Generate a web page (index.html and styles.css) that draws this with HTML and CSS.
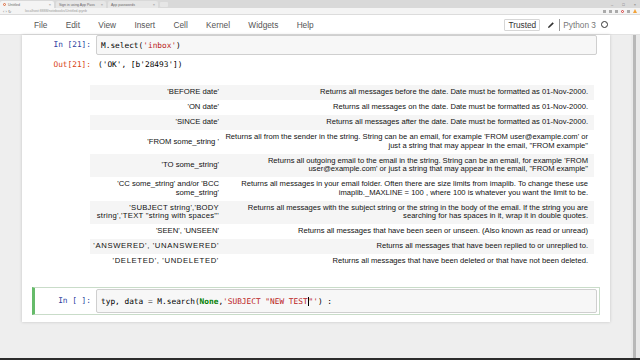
FILE: index.html
```html
<!DOCTYPE html>
<html lang="en">
<head>
    <meta charset="UTF-8">
    <title>Untitled</title>
    <link rel="stylesheet" href="styles.css">
</head>
<body>

<div class="tabs">
    <div class="tab active"><span class="favicon"></span><span class="tab-title">Untitled</span><span class="tab-x">×</span></div>
    <div class="tab"><span class="tab-title">Sign in using App Pass</span><span class="tab-x">×</span></div>
    <div class="tab"><span class="tab-title">App passwords</span><span class="tab-x">×</span></div>
    <div class="tab-new"></div>
    <div class="win-btns"><span>–</span><span>□</span><span>×</span></div>
</div>

<div class="address">
    <span class="nav">‹ › ↻</span>
    <span class="url">localhost:8888/notebooks/Untitled.ipynb</span>
    <div class="ext">
        <span class="ext-ico"></span>
        <span class="ext-ico"></span>
        <span class="ext-ico"></span>
        <span class="ext-ico red"></span>
        <span class="ext-ico"></span>
        <span class="ext-warn"></span>
    </div>
</div>

<header class="menubar">
    <nav class="menu">
        <span>File</span>
        <span>Edit</span>
        <span>View</span>
        <span>Insert</span>
        <span>Cell</span>
        <span>Kernel</span>
        <span>Widgets</span>
        <span>Help</span>
    </nav>
    <div class="kernel">
        <span class="trusted">Trusted</span>
        <svg class="pencil" width="8" height="8" viewBox="0 0 8 8">
            <path d="M1 7 L1.4 5.4 L5.6 1.2 L6.8 2.4 L2.6 6.6 Z" fill="#333"/>
        </svg>
        <span class="divider"></span>
        <span class="kernel-name">Python 3</span>
        <span class="kernel-dot"></span>
    </div>
</header>

<div class="site">
    <div class="page">
        <div class="notebook">

            <div class="cell first">
                <div class="prompt in">In&nbsp;[21]:</div>
                <div class="input">M.select(<span class="str">'inbox'</span>)</div>
            </div>
            <div class="cell out-cell">
                <div class="prompt out">Out[21]:</div>
                <div class="output">('OK', [b'28493'])</div>
            </div>

            <div class="cell md-cell">
                <div class="prompt"></div>
                <div class="md">
                    <table class="search-table">
                        <colgroup><col class="col-key"><col class="col-desc"></colgroup>
                        <tr><td>'BEFORE date'</td><td>Returns all messages before the date. Date must be formatted as 01-Nov-2000.</td></tr>
                        <tr><td>'ON date'</td><td>Returns all messages on the date. Date must be formatted as 01-Nov-2000.</td></tr>
                        <tr><td>'SINCE date'</td><td>Returns all messages after the date. Date must be formatted as 01-Nov-2000.</td></tr>
                        <tr><td>'FROM some_string '</td><td>Returns all from the sender in the string. String can be an email, for example 'FROM user@example.com' or<br>just a string that may appear in the email, "FROM example"</td></tr>
                        <tr><td>'TO some_string'</td><td>Returns all outgoing email to the email in the string. String can be an email, for example 'FROM<br>user@example.com' or just a string that may appear in the email, "FROM example"</td></tr>
                        <tr><td>'CC some_string' and/or 'BCC<br>some_string'</td><td>Returns all messages in your email folder. Often there are size limits from imaplib. To change these use<br>imaplib._MAXLINE = 100 , where 100 is whatever you want the limit to be.</td></tr>
                        <tr><td class="spaced">'SUBJECT string','BODY<br>string','TEXT "string with spaces"'</td><td>Returns all messages with the subject string or the string in the body of the email. If the string you are<br>searching for has spaces in it, wrap it in double quotes.</td></tr>
                        <tr><td>'SEEN', 'UNSEEN'</td><td>Returns all messages that have been seen or unseen. (Also known as read or unread)</td></tr>
                        <tr><td class="wide">'ANSWERED', 'UNANSWERED'</td><td>Returns all messages that have been replied to or unreplied to.</td></tr>
                        <tr><td class="wide">'DELETED', 'UNDELETED'</td><td>Returns all messages that have been deleted or that have not been deleted.</td></tr>
                    </table>
                </div>
            </div>

            <div class="cell selected">
                <div class="prompt in">In&nbsp;[&nbsp;]:</div>
                <div class="input">typ, data <span class="op">=</span> M.search(<span class="kw">None</span>,<span class="str">'SUBJECT "NEW TEST<span class="cursor"></span>"'</span>) :</div>
            </div>

        </div>
    </div>
    <div class="scrollbar"><div class="thumb"></div></div>
</div>

<div class="taskbar"></div>

</body>
</html>
```

FILE: styles.css
```css
*{
    margin: 0;
    padding: 0;
    box-sizing: border-box;
}

body{
    width: 640px;
    height: 360px;
    overflow: hidden;
    background-color: #eeeeee;
    font-family: "Liberation Sans", Arial, sans-serif;
    color: #000;
}

/* browser chrome */

.tabs{
    display: flex;
    align-items: flex-end;
    height: 8px;
    background-color: #d9d9d9;
}

.tab{
    display: flex;
    align-items: center;
    gap: 2px;
    width: 50px;
    height: 7px;
    margin-right: 2px;
    padding: 0 3px;
    background-color: #e6e6e6;
    border-radius: 2px 2px 0 0;
    font-size: 3.5px;
    color: #666;
}

.tab.active{
    width: 54px;
    background-color: #f4f4f4;
}

.favicon{
    width: 3px;
    height: 3px;
    border-radius: 50%;
    border: 1px solid #e06a3b;
}

.tab-title{
    flex: 1;
    white-space: nowrap;
}

.tab-x{
    font-size: 4px;
    color: #888;
}

.tab-new{
    width: 8px;
    height: 5px;
    margin-bottom: 1px;
    background-color: #e6e6e6;
    border-radius: 1px;
}

.win-btns{
    display: flex;
    gap: 9px;
    margin-left: auto;
    padding-right: 4px;
    align-self: center;
    font-size: 4px;
    color: #666;
}

.address{
    display: flex;
    align-items: center;
    height: 7px;
    padding: 0 3px;
    background-color: #f4f4f4;
    border-bottom: 1px solid #dcdcdc;
    font-size: 3.5px;
    color: #888;
}

.nav{
    width: 22px;
    font-size: 4px;
    color: #777;
}

.url{
    color: #999;
}

.ext{
    display: flex;
    gap: 3px;
    margin-left: auto;
    align-items: center;
}

.ext-ico{
    width: 3px;
    height: 3px;
    background-color: #aaa;
}

.ext-ico.red{
    border-radius: 50%;
    background-color: #fff;
    border: 1px solid #d43c3c;
}

.ext-warn{
    width: 0;
    height: 0;
    border-left: 2px solid transparent;
    border-right: 2px solid transparent;
    border-bottom: 4px solid #f2a33a;
}

/* notebook header */

.menubar{
    display: flex;
    align-items: center;
    height: 20px;
    background-color: #fff;
    border-bottom: 1px solid #e2e2e2;
}

.menu{
    display: flex;
    gap: 18.3px;
    padding-left: 34px;
    font-size: 8.3px;
    color: #555;
}

.kernel{
    display: flex;
    align-items: center;
    margin-left: auto;
    padding-right: 32px;
    font-size: 8.3px;
}

.trusted{
    display: flex;
    align-items: center;
    height: 12px;
    padding: 0 3px;
    border: 1px solid #d6d6d6;
    border-radius: 1px;
    color: #333;
}

.pencil{
    margin-left: 7px;
}

.divider{
    width: 1px;
    height: 12px;
    margin: 0 3px 0 4px;
    background-color: #999;
}

.kernel-name{
    color: #777;
}

.kernel-dot{
    width: 7px;
    height: 7px;
    margin-left: 5px;
    border: 1px solid #333;
    border-radius: 50%;
}

/* notebook */

.site{
    display: flex;
    height: 323px;
}

.page{
    flex: 1;
    padding-left: 22px;
}

.notebook{
    width: 588px;
    height: 287px;
    background-color: #fff;
    box-shadow: 0 0 3px rgba(0, 0, 0, 0.18);
}

.cell{
    display: flex;
    margin: 0 10px;
    padding: 0 2px;
    border: 1px solid transparent;
}

.cell.first{
    border-top: 0;
}

.prompt{
    flex: 0 0 61px;
    padding-right: 5px;
    text-align: right;
    font-family: "DejaVu Sans Mono", monospace;
    font-size: 7.8px;
    line-height: 19px;
}

.prompt.in{
    color: #303f9f;
}

.prompt.out{
    color: #d84315;
    line-height: 13px;
}

.input{
    flex: 1;
    height: 20px;
    padding-left: 4px;
    background-color: #f7f7f7;
    border: 1px solid #cfcfcf;
    border-radius: 2px;
    font-family: "DejaVu Sans Mono", monospace;
    font-size: 7.8px;
    line-height: 19px;
    color: #000;
    white-space: pre;
}

.str{
    color: #ba2121;
}

.kw{
    color: #008000;
    font-weight: bold;
}

.op{
    color: #666;
}

.cursor{
    display: inline-block;
    width: 0;
    height: 9px;
    border-left: 1px solid #000;
    vertical-align: -2px;
}

.out-cell{
    margin-top: 1px;
}

.output{
    padding-left: 2px;
    font-family: "DejaVu Sans Mono", monospace;
    font-size: 7.8px;
    line-height: 13px;
    white-space: pre;
}

.md-cell{
    margin-top: 12px;
}

.md{
    flex: 1;
}

.search-table{
    table-layout: fixed;
    width: 504px;
    margin-left: -6px;
    border-collapse: collapse;
    font-size: 7.6px;
    line-height: 8.5px;
    color: #111;
}

.col-key{
    width: 130px;
}

.col-desc{
    width: 374px;
}

.search-table td{
    padding: 3.25px 1px;
    text-align: right;
    white-space: nowrap;
}

.search-table td:first-child{
    padding-left: 0;
    font-size: 7.7px;
}

.search-table td:last-child{
    padding-right: 6px;
}

.search-table td.spaced{
    letter-spacing: 0.25px;
}

.search-table td.wide{
    letter-spacing: 0.65px;
}

.search-table tr:nth-child(odd){
    background-color: #f5f5f5;
}

.cell.selected{
    margin-top: 17px;
    padding: 1px 2px 1px 0;
    border-color: #c9dcc9;
    border-left: 3px solid #66bb6a;
}

.selected .input{
    height: 24px;
    line-height: 23px;
}

.selected .prompt{
    line-height: 24px;
}

.scrollbar{
    width: 9px;
    background-color: #e9e9e9;
}

.thumb{
    width: 3px;
    height: 100%;
    margin-left: 2px;
    background-color: #b8b8b8;
}

.taskbar{
    height: 2px;
    background-color: #2b2b2b;
}
```
